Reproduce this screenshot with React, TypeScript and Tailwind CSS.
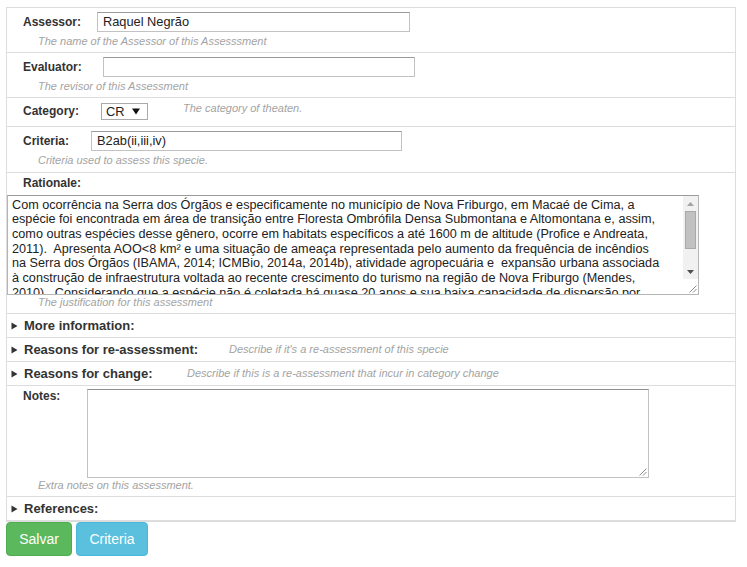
import React from "react";

const font = "font-['Liberation_Sans',Arial,sans-serif]";
const label = "text-[12px] font-bold text-[#333] leading-[14px] shrink-0";
const hint = "text-[11px] italic text-[#a3a3a3] leading-[13px] whitespace-nowrap";
const input =
  "h-[20px] border border-[#c2c2c2] border-t-[#9a9a9a] bg-white pl-[5px] text-[12.8px] leading-[18px] text-[#222] whitespace-nowrap";

const lines = [
  "Com ocorrência na Serra dos Órgãos e especificamente no município de Nova Friburgo, em Macaé de Cima, a",
  "espécie foi encontrada em área de transição entre Floresta Ombrófila Densa Submontana e Altomontana e, assim,",
  "como outras espécies desse gênero, ocorre em habitats específicos a até 1600 m de altitude (Profice e Andreata,",
  "2011).  Apresenta AOO<8 km² e uma situação de ameaça representada pelo aumento da frequência de incêndios",
  "na Serra dos Órgãos (IBAMA, 2014; ICMBio, 2014a, 2014b), atividade agropecuária e  expansão urbana associada",
  "à construção de infraestrutura voltada ao recente crescimento do turismo na região de Nova Friburgo (Mendes,",
  "2010).  Considerando que a espécie não é coletada há quase 20 anos e sua baixa capacidade de dispersão por",
];

function Tri() {
  return (
    <svg width="7" height="8" viewBox="0 0 7 8" className="mr-[6px] shrink-0">
      <path d="M0.5 0.5 L6.5 4 L0.5 7.5 Z" fill="#333" />
    </svg>
  );
}

function Grip() {
  return (
    <svg width="10" height="10" viewBox="0 0 10 10">
      <path d="M9.5 2.5 L2.5 9.5 M9.5 6 L6 9.5" stroke="#8a8a8a" strokeWidth="1" />
    </svg>
  );
}

export default function App() {
  return (
    <div className={`${font} bg-white w-[747px] h-[567px] overflow-hidden`}>
      <div className="pt-[7px]">
        <div className="ml-[6px] w-[730px] border border-[#dddddd] border-b-2">
          {/* Assessor */}
          <div className="h-[45px] border-b border-[#dddddd] pt-[4px]">
            <div className="flex items-center pl-[16px]">
              <span className={`${label} w-[74px]`}>Assessor:</span>
              <div className={`${input} w-[313px]`}>Raquel Negrão</div>
            </div>
            <div className={`${hint} pl-[31px] mt-[2.5px]`}>The name of the Assessor of this Assesssment</div>
          </div>
          {/* Evaluator */}
          <div className="h-[45px] border-b border-[#dddddd] pt-[4px]">
            <div className="flex items-center pl-[16px]">
              <span className={`${label} w-[80px]`}>Evaluator:</span>
              <div className={`${input} w-[312px]`}></div>
            </div>
            <div className={`${hint} pl-[31px] mt-[2.5px]`}>The revisor of this Assessment</div>
          </div>
          {/* Category */}
          <div className="h-[29px] border-b border-[#dddddd] flex items-start pl-[16px]">
            <span className={`${label} w-[78px] mt-[6px]`}>Category:</span>
            <div className="mt-[5px] h-[17px] w-[47px] border border-[#aaaaaa] bg-white flex items-center pl-[4px] text-[12.8px] text-[#222] leading-[15px]">
              <span>CR</span>
              <svg width="8" height="7" viewBox="0 0 8 7" className="ml-[8px]">
                <path d="M0 0.5 L8 0.5 L4 6.5 Z" fill="#111" />
              </svg>
            </div>
            <span className={`${hint} ml-[35px] mt-[3.5px]`}>The category of theaten.</span>
          </div>
          {/* Criteria */}
          <div className="h-[46px] border-b border-[#dddddd] pt-[4px]">
            <div className="flex items-center pl-[16px]">
              <span className={`${label} w-[68px]`}>Criteria:</span>
              <div className={`${input} w-[311px]`}>B2ab(ii,iii,iv)</div>
            </div>
            <div className={`${hint} pl-[31px] mt-[2.5px]`}>Criteria used to assess this specie.</div>
          </div>
          {/* Rationale */}
          <div className="h-[141px] border-b border-[#dddddd] pt-[3px]">
            <div className={`${label} pl-[16px]`}>Rationale:</div>
            <div className="mt-[5px] w-[692px] h-[100px] border border-[#b5b5b5] border-t-[#9a9a9a] bg-white flex">
              <div className="flex-1 h-[98px] overflow-hidden pl-[4px] pt-[1.5px] text-[12.65px] leading-[14.7px] text-[#222]">
                {lines.map((l, i) => (
                  <div key={i} className="whitespace-pre">
                    {l}
                  </div>
                ))}
              </div>
              <div className="w-[15px] shrink-0 flex flex-col bg-[#f1f1f1]">
                <div className="h-[15px] flex items-center justify-center">
                  <svg width="7" height="4" viewBox="0 0 7 4">
                    <path d="M0 4 L7 4 L3.5 0 Z" fill="#a3a3a3" />
                  </svg>
                </div>
                <div className="flex-1">
                  <div className="mx-[2px] h-[38px] bg-[#c1c1c1] border border-[#a9a9a9]"></div>
                </div>
                <div className="h-[15px] flex items-center justify-center">
                  <svg width="7" height="4" viewBox="0 0 7 4">
                    <path d="M0 0 L7 0 L3.5 4 Z" fill="#505050" />
                  </svg>
                </div>
                <div className="h-[15px] bg-white flex items-end justify-end pr-[1px] pb-[1px]">
                  <Grip />
                </div>
              </div>
            </div>
            <div className={`${hint} pl-[31px] mt-[0.5px]`}>The justification for this assessment</div>
          </div>
          {/* More information */}
          <div className="h-[24px] border-b border-[#dddddd] flex items-center pl-[4px]">
            <Tri />
            <span className="text-[13px] font-bold text-[#333] leading-[15px]">More information:</span>
          </div>
          {/* Reasons for re-assessment */}
          <div className="h-[24px] border-b border-[#dddddd] flex items-center pl-[4px]">
            <Tri />
            <span className="text-[13px] font-bold text-[#333] leading-[15px] w-[205px] shrink-0 whitespace-nowrap">Reasons for re-assessment:</span>
            <span className={hint}>Describe if it's a re-assessment of this specie</span>
          </div>
          {/* Reasons for change */}
          <div className="h-[24px] border-b border-[#dddddd] flex items-center pl-[4px]">
            <Tri />
            <span className="text-[13px] font-bold text-[#333] leading-[15px] w-[163px] shrink-0 whitespace-nowrap">Reasons for change:</span>
            <span className={hint}>Describe if this is a re-assessment that incur in category change</span>
          </div>
          {/* Notes */}
          <div className="h-[111px] border-b border-[#dddddd] pt-[3px]">
            <div className="flex items-start pl-[16px]">
              <span className={`${label} w-[64px]`}>Notes:</span>
              <div className="w-[562px] h-[89px] border border-[#c2c2c2] border-t-[#8f8f8f] bg-white flex items-end justify-end pr-[1px] pb-[1px]">
                <Grip />
              </div>
            </div>
            <div className={`${hint} pl-[31px] mt-[0.5px]`}>Extra notes on this assessment.</div>
          </div>
          {/* References */}
          <div className="h-[23px] flex items-center pl-[4px]">
            <Tri />
            <span className="text-[13px] font-bold text-[#333] leading-[15px]">References:</span>
          </div>
        </div>
        <div className="flex gap-[4px] ml-[6px]">
          <button className="h-[34px] w-[66px] rounded-[4px] bg-[#5cb85c] border border-[#4cae4c] text-white text-[14px] leading-[20px]">
            Salvar
          </button>
          <button className="h-[34px] w-[72px] rounded-[4px] bg-[#5bc0de] border border-[#46b8da] text-white text-[14px] leading-[20px]">
            Criteria
          </button>
        </div>
      </div>
    </div>
  );
}
